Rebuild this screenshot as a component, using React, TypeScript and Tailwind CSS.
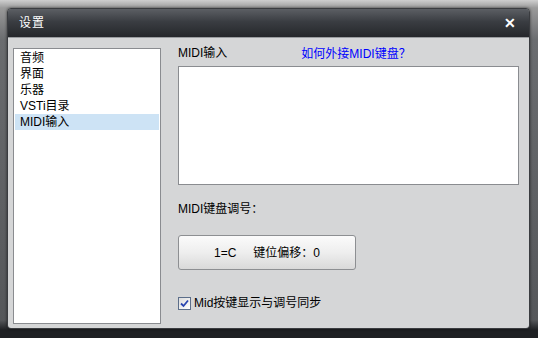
import React from "react";

const font = { fontFamily: '"Liberation Sans", "Noto Sans CJK SC", sans-serif' };
const cjk = { fontFamily: '"Noto Sans CJK SC", sans-serif' };

export default function App() {
  const items = ["音频", "界面", "乐器", "VSTi目录", "MIDI输入"];
  return (
    <div
      className="w-[538px] h-[338px] overflow-hidden pt-[8px] pl-[7px] bg-[linear-gradient(to_bottom,#cfcfcf_0px,#9a9a9a_8px,#6a6c6f_40px,#55575a_320px,#1e2023_330px)]"
      style={font}
    >
      <div className="w-[523px] h-[321px] flex flex-col rounded-[4px] overflow-hidden border border-[#3a3c40] shadow-[0_0_3px_rgba(0,0,0,0.6)]">
        <div className="h-[28px] shrink-0 flex items-center justify-between pl-[11px] pr-[13px] bg-[linear-gradient(to_bottom,#5c5f64,#3a3d42_45%,#25272b)]">
          <span className="text-white text-[12px] leading-none tracking-[1px]">设置</span>
          <span className="text-white text-[14px] font-bold leading-none">✕</span>
        </div>
        <div className="flex-1 bg-[#d5d6d7] flex pt-[10px] pl-[5px] pb-[5px] border-t border-[#9a9c9f]">
          <div className="w-[148px] h-[276px] bg-white border border-[#8a8c90] pt-[1px] px-[1px] text-[12px] text-black">
            {items.map((t, i) => (
              <div
                key={t}
                className={
                  "h-[16px] leading-[16px] pl-[5px] " +
                  (i === 4 ? "bg-[#cde3f5]" : "")
                }
              >
                {t}
              </div>
            ))}
          </div>
          <div className="flex flex-col ml-[17px] w-[341px] text-[12px] text-black">
            <div className="flex h-[16px] leading-[16px] items-center -mt-[3px]">
              <span>MIDI输入</span>
              <span className="ml-[74px] text-[#0000ff]">
                如何外接MIDI键盘<span style={cjk}>？</span>
              </span>
            </div>
            <div className="mt-[5px] h-[119px] bg-white border border-[#8a8c90]"></div>
            <div className="mt-[15px] h-[16px] leading-[16px]">
              MIDI键盘调号<span style={cjk}>：</span>
            </div>
            <button className="mt-[19px] w-[178px] h-[35px] rounded-[3px] border border-[#8d8f92] bg-[linear-gradient(to_bottom,#fbfbfb,#eeeeee_50%,#d9d9d9)] flex items-center justify-center text-[12px] text-black">
              <span>1=C</span>
              <span className="ml-[17px]">
                键位偏移<span style={cjk}>：</span>0
              </span>
            </button>
            <div className="mt-[26px] flex items-center h-[14px]">
              <div className="w-[13px] h-[13px] border border-[#5c6e8a] bg-[linear-gradient(to_bottom_right,#dcdcdc,#ffffff)] flex items-center justify-center">
                <svg width="9" height="9" viewBox="0 0 9 9">
                  <path d="M1 4.5 L3.5 7 L8 1.5" stroke="#2a45b0" strokeWidth="1.8" fill="none" />
                </svg>
              </div>
              <span className="ml-[3px] leading-[14px]">Mid按键显示与调号同步</span>
            </div>
          </div>
        </div>
      </div>
    </div>
  );
}
